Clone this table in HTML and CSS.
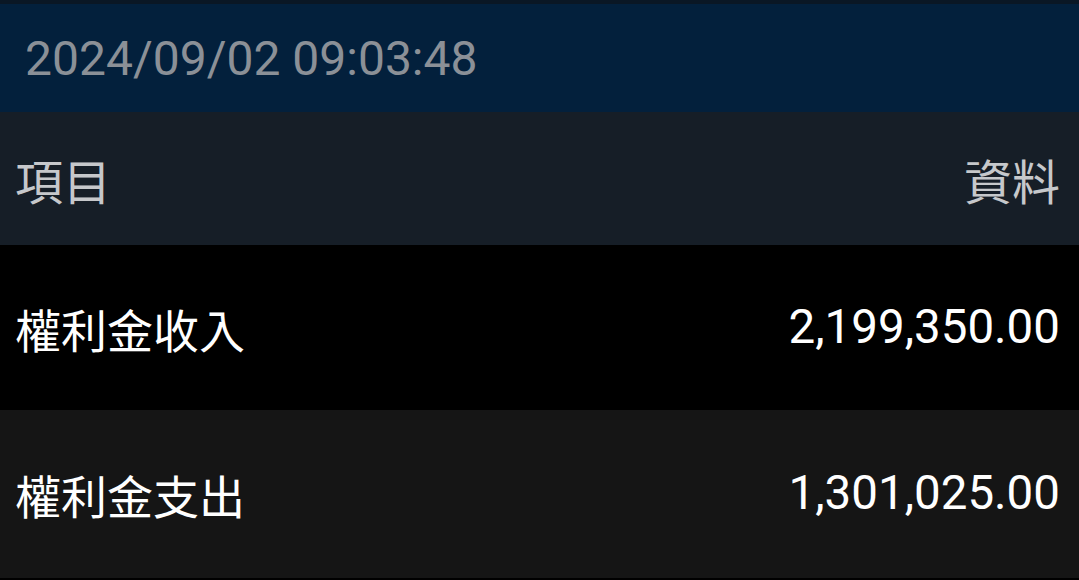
FILE: index.html
```html
<!DOCTYPE html>
<html lang="zh-Hant">
<head>
<meta charset="utf-8">
<link rel="stylesheet" href="styles.css">
</head>
<body>
<div class="page">
  <div class="topstrip"></div>
  <div class="datebar"><span class="date">2024/09/02 09:03:48</span></div>
  <div class="row head">
    <span class="label">項目</span>
    <span class="value">資料</span>
  </div>
  <div class="row odd">
    <span class="label">權利金收入</span>
    <span class="value num">2,199,350.00</span>
  </div>
  <div class="row even">
    <span class="label">權利金支出</span>
    <span class="value num">1,301,025.00</span>
  </div>
</div>
</body>
</html>
```
FILE: styles.css
```css
html, body {
  margin: 0;
  padding: 0;
  background: #000;
}
.page {
  width: 1079px;
  height: 580px;
  overflow: hidden;
  display: flex;
  flex-direction: column;
  font-family: Roboto, "Noto Sans CJK TC", sans-serif;
}
.topstrip {
  height: 4px;
  background: #0a1725;
}
.datebar {
  height: 108px;
  background: #03203c;
  display: flex;
  align-items: center;
  padding-left: 25px;
}
.date {
  font-size: 48px;
  color: #8b9097;
  line-height: 1;
  padding-top: 2px;
}
.row {
  display: flex;
  justify-content: space-between;
  align-items: center;
  padding: 0 19px 0 15px;
}
.head {
  height: 133px;
  background: #161e27;
  color: #c6c8cb;
}
.head .label,
.head .value {
  font-size: 48px;
}
.odd {
  height: 165px;
  background: #000;
  color: #fff;
}
.even {
  height: 168px;
  background: #151515;
  color: #fff;
}
.label {
  font-family: "Noto Sans CJK TC", sans-serif;
  font-size: 46px;
  line-height: 1;
}
.value {
  font-family: "Noto Sans CJK TC", sans-serif;
  font-size: 46px;
  line-height: 1;
}
.value.num {
  font-family: Roboto, sans-serif;
  font-size: 47.5px;
}
```
